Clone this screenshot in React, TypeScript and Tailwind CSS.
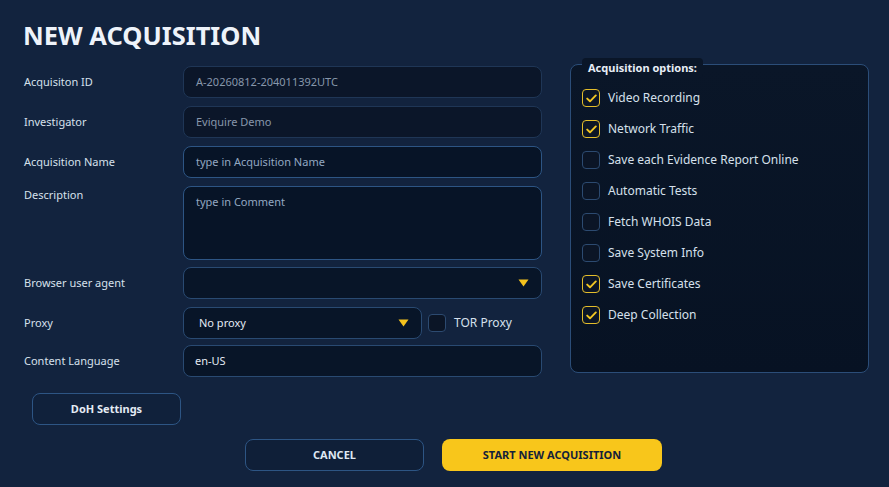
const font = { fontFamily: '"Noto Sans", "Open Sans", sans-serif' };

const options = [
  { label: 'Video Recording', checked: true },
  { label: 'Network Traffic', checked: true },
  { label: 'Save each Evidence Report Online', checked: false },
  { label: 'Automatic Tests', checked: false },
  { label: 'Fetch WHOIS Data', checked: false },
  { label: 'Save System Info', checked: false },
  { label: 'Save Certificates', checked: true },
  { label: 'Deep Collection', checked: true },
];

function Check({ checked }: { checked: boolean }) {
  return (
    <div
      className={`w-[18px] h-[18px] rounded-[4px] border-[1.5px] flex items-center justify-center shrink-0 ${
        checked ? 'border-[#e3bd2b] bg-[#0b1526]' : 'border-[#2c4a70] bg-[#0b1526]'
      }`}
    >
      {checked && (
        <svg width="11" height="9" viewBox="0 0 11 9" fill="none">
          <path d="M1.2 4.6 L4 7.3 L9.8 1.4" stroke="#f2c623" strokeWidth="1.9" strokeLinecap="round" strokeLinejoin="round" />
        </svg>
      )}
    </div>
  );
}

function Caret() {
  return (
    <svg width="11" height="8" viewBox="0 0 11 8" className="shrink-0">
      <path d="M0.5 0.5 H10.5 L5.5 7.5 Z" fill="#f4c21d" />
    </svg>
  );
}

function Row({
  label,
  children,
  top = false,
  className = '',
}: {
  label: string;
  children: React.ReactNode;
  top?: boolean;
  className?: string;
}) {
  return (
    <div className={`flex ${top ? 'items-start' : 'items-center'} ${className}`}>
      <div className={`w-[159px] shrink-0 text-[11px] text-[#d6e0ec] ${top ? 'pt-[1px]' : ''}`}>{label}</div>
      {children}
    </div>
  );
}

export default function App() {
  return (
    <div className="w-[889px] h-[487px] bg-[#12233e] overflow-hidden" style={font}>
      <h1 className="pl-[23px] pt-[18px] text-[25.5px] leading-[34px] font-bold text-[#eef3fa]">
        NEW ACQUISITION
      </h1>

      <div className="flex items-start mt-[12px] pl-[24px]">
        {/* Formular links */}
        <div className="w-[518px] pt-[2px] flex flex-col">
          <Row label="Acquisiton ID">
            <div className="flex-1 h-[32px] rounded-[8px] border border-[#1f3656] bg-[#0b1629] flex items-center px-[12px] text-[11px] text-[#8797ab]">
              A-20260812-204011392UTC
            </div>
          </Row>
          <Row label="Investigator" className="mt-[8px]">
            <div className="flex-1 h-[32px] rounded-[8px] border border-[#1f3656] bg-[#0b1629] flex items-center px-[12px] text-[11px] text-[#8797ab]">
              Eviquire Demo
            </div>
          </Row>
          <Row label="Acquisition Name" className="mt-[8px]">
            <div className="flex-1 h-[32px] rounded-[8px] border border-[#2d5584] bg-[#071427] flex items-center px-[12px] text-[11px] text-[#93a8c2]">
              type in Acquisition Name
            </div>
          </Row>
          <Row label="Description" top className="mt-[8px]">
            <div className="flex-1 h-[74px] rounded-[8px] border border-[#2d5584] bg-[#071427] px-[12px] pt-[7px] text-[11px] text-[#93a8c2]">
              type in Comment
            </div>
          </Row>
          <Row label="Browser user agent" className="mt-[7px]">
            <div className="flex-1 h-[32px] rounded-[8px] border border-[#294a72] bg-[#081528] flex items-center justify-end pr-[12px]">
              <Caret />
            </div>
          </Row>
          <Row label="Proxy" className="mt-[8px]">
            <div className="w-[239px] h-[32px] rounded-[8px] border border-[#294a72] bg-[#081528] flex items-center justify-between pl-[15px] pr-[12px] text-[11px] text-[#e4ebf4]">
              <span>No proxy</span>
              <Caret />
            </div>
            <div className="ml-[6px] flex items-center gap-[8px]">
              <Check checked={false} />
              <span className="text-[12px] text-[#d6e0ec]">TOR Proxy</span>
            </div>
          </Row>
          <Row label="Content Language" className="mt-[6px]">
            <div className="flex-1 h-[32px] rounded-[8px] border border-[#294a72] bg-[#081528] flex items-center px-[11px] text-[11px] text-[#e4ebf4]">
              en-US
            </div>
          </Row>

          <div className="mt-[16px] ml-[8px] w-[149px] h-[32px] rounded-[8px] border border-[#2d5584] bg-[#10213b] flex items-center justify-center text-[11px] font-bold text-[#e4ebf4]">
            DoH Settings
          </div>
        </div>

        {/* Optionen rechts */}
        <div className="ml-[28px] w-[299px] h-[309px] relative rounded-[8px] border border-[#2b4d78] bg-gradient-to-b from-[#0a1628] to-[#071223] pt-[24px] px-[11px]">
          <div className="absolute left-[11px] -top-[7px] px-[6px] h-[20px] rounded-[4px] bg-[#0a1628] flex items-center text-[11px] font-bold text-[#e8eef6]">
            Acquisition options:
          </div>
          <div className="flex flex-col gap-[13px]">
            {options.map((o) => (
              <div key={o.label} className="flex items-center gap-[8px]">
                <Check checked={o.checked} />
                <span className="text-[12px] text-[#d6e0ec]">{o.label}</span>
              </div>
            ))}
          </div>
        </div>
      </div>

      {/* Aktionen */}
      <div className="flex mt-[14px] pl-[245px] gap-[18px]">
        <div className="w-[179px] h-[32px] rounded-[8px] border border-[#2d5584] bg-[#0f1f38] flex items-center justify-center text-[11px] font-bold text-[#dfe8f3]">
          CANCEL
        </div>
        <div className="w-[220px] h-[32px] rounded-[8px] bg-[#f8c61b] flex items-center justify-center text-[11px] font-bold text-[#13213a]">
          START NEW ACQUISITION
        </div>
      </div>
    </div>
  );
}
